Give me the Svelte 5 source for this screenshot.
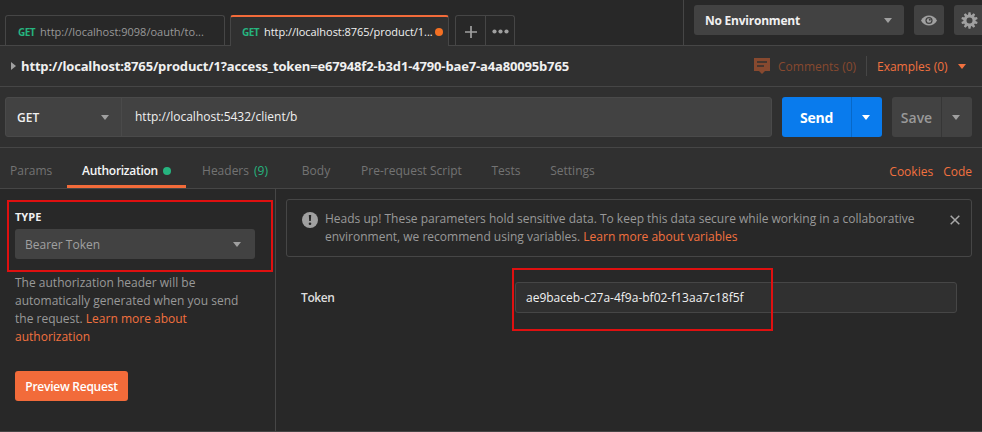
<script>
  const requestTabs = [
    { label: 'Params', width: 67 },
    { label: 'Authorization', width: 119, active: true },
    { label: 'Headers', width: 98, count: '(9)' },
    { label: 'Body', width: 64 },
    { label: 'Pre-request Script', width: 127 },
    { label: 'Tests', width: 62 },
    { label: 'Settings', width: 71 }
  ];
</script>

{#snippet caret()}
  <svg class="caret" width="8" height="5" viewBox="0 0 8 5"><path d="M0 0h8L4 5z" fill="currentColor" /></svg>
{/snippet}

<div class="app">
  <header class="topbar">
    <div class="tabs">
      <div class="tab"><b class="verb">GET</b><span class="url-one">http://localhost:9098/oauth/to...</span></div>
      <div class="tab current"><b class="verb">GET</b><span class="url-two">http://localhost:8765/product/1...</span><i class="unsaved"></i></div>
      <div class="tab-actions">
        <button aria-label="New tab"><svg width="12" height="12" viewBox="0 0 12 12"><path d="M6 0v12M0 6h12" stroke="#a0a0a0" stroke-width="1.7" /></svg></button>
        <button aria-label="More"><svg width="17" height="5" viewBox="0 0 17 5" fill="#a0a0a0"><circle cx="2.5" cy="2.5" r="2.1" /><circle cx="8.5" cy="2.5" r="2.1" /><circle cx="14.5" cy="2.5" r="2.1" /></svg></button>
      </div>
    </div>
    <div class="environment">
      <div class="env-select"><b>No Environment</b>{@render caret()}</div>
      <button class="square" aria-label="Preview environment">
        <svg width="16" height="11" viewBox="0 0 16 11"><path d="M0 5.5C3.4-1.3 12.6-1.3 16 5.5C12.6 12.3 3.4 12.3 0 5.5z" fill="#a0a0a0" /><circle cx="8" cy="5.5" r="3.6" fill="#424242" /><circle cx="8" cy="5.5" r="2.3" fill="#a0a0a0" /><circle cx="8.8" cy="4.7" r="1" fill="#424242" /></svg>
      </button>
      <button class="square" aria-label="Manage environments">
        <svg width="17" height="17" viewBox="-8.5 -8.5 17 17" fill="#a0a0a0">
          {#each [0, 36, 72, 108, 144, 180, 216, 252, 288, 324] as angle}<path d="M-1.6-5L-1-8.2h2L1.6-5z" transform="rotate({angle})" />{/each}
          <circle r="4.5" fill="none" stroke="#a0a0a0" stroke-width="3" />
        </svg>
      </button>
    </div>
  </header>

  <section class="request-title">
    <svg width="5" height="8" viewBox="0 0 5 8"><path d="M0 0l5 4-5 4z" fill="#a0a0a0" /></svg>
    <b>http://localhost:8765/product/1?access_token=e67948f2-b3d1-4790-bae7-a4a80095b765</b>
    <div class="comments">
      <svg width="16" height="16" viewBox="0 0 16 16"><path d="M0 0h16v13h-5l-3 3-3-3H0z" fill="#87492f" /><path d="M3 4h10M3 8h7" stroke="#303030" stroke-width="1.6" /></svg>
      <span>Comments (0)</span>
    </div>
    <div class="examples"><span>Examples (0)</span>{@render caret()}</div>
  </section>

  <section class="request-line">
    <div class="url-bar">
      <div class="method"><span>GET</span>{@render caret()}</div>
      <div class="url">http://localhost:5432/client/b</div>
    </div>
    <div class="split send"><b>Send</b><div>{@render caret()}</div></div>
    <div class="split save"><b>Save</b><div>{@render caret()}</div></div>
  </section>

  <nav>
    {#each requestTabs as tab}
      <div class="nav-item" class:active={tab.active} style="width: {tab.width}px">
        <span>{tab.label}</span>
        {#if tab.active}<i></i>{/if}
        {#if tab.count}<em>{tab.count}</em>{/if}
      </div>
    {/each}
    <div class="nav-links"><span>Cookies</span><span>Code</span></div>
  </nav>

  <main>
    <aside>
      <b class="type">TYPE</b>
      <div class="type-select"><span>Bearer Token</span>{@render caret()}</div>
      <p>The authorization header will be<br />automatically generated when you send<br />the request. <a>Learn more about<br />authorization</a></p>
      <button class="preview"><span>Preview Request</span></button>
      <div class="marker type-marker"></div>
    </aside>
    <div class="content">
      <div class="notice">
        <svg width="16" height="16" viewBox="0 0 16 16"><circle cx="8" cy="8" r="8" fill="#a0a0a0" /><path d="M6.8 3h2.4l-.4 6H7.2z" fill="#282828" /><circle cx="8" cy="11.7" r="1.3" fill="#282828" /></svg>
        <p>Heads up! These parameters hold sensitive data. To keep this data secure while working in a collaborative<br />environment, we recommend using variables. <a>Learn more about variables</a></p>
        <svg class="close" width="10" height="10" viewBox="0 0 10 10"><path d="M.7.7l8.6 8.6M9.3.7L.7 9.3" stroke="#a8a8a8" stroke-width="1.5" /></svg>
      </div>
      <div class="field">
        <span>Token</span>
        <div class="token"><span>ae9baceb-c27a-4f9a-bf02-f13aa7c18f5f</span><div class="marker token-marker"></div></div>
      </div>
    </div>
  </main>
</div>

<style>
  :global(body) { margin: 0; background: #282828; overflow: hidden; }
  .app, .app * { box-sizing: border-box; }
  .app { width: 982px; height: 432px; display: flex; flex-direction: column; background: #303030; color: #f0f0f0; font: 12px/18px "Open Sans", sans-serif; white-space: nowrap; }
  button { margin: 0; padding: 0; border: 0; background: none; font: inherit; color: inherit; }
  svg { display: block; flex: none; }
  b { font-weight: 700; }
  .caret { color: #a0a0a0; }

  .topbar { height: 46px; flex: none; display: flex; background: #282828; border-bottom: 1px solid #464646; }
  .tabs { width: 683px; display: flex; align-items: flex-start; padding: 15px 0 0 5px; }
  .tab { width: 220px; height: 30px; display: flex; align-items: center; padding: 3px 0 0 12px; margin-right: 5px; border: 1px solid #464646; border-bottom: 0; border-radius: 3px 3px 0 0; color: #999; font-size: 11px; }
  .verb { width: 22px; flex: none; color: #26b47f; font-size: 10px; letter-spacing: -0.6px; }
  .current { width: 219px; height: 31px; background: #303030; border-top: 2px solid #f26b3a; color: #f0f0f0; padding-top: 1px; padding-left: 11px; margin-right: 6px; }
  .url-two { width: 170px; letter-spacing: -0.04px; }
  .unsaved { width: 8px; height: 8px; flex: none; border-radius: 50%; background: #f47023; margin-left: 1px; }
  .tab-actions { width: 60px; height: 30px; display: flex; border: 1px solid #464646; border-bottom: 0; border-radius: 3px 3px 0 0; }
  .tab-actions button { width: 30px; display: flex; align-items: center; justify-content: center; padding-top: 2px; }
  .tab-actions button + button { border-left: 1px solid #464646; width: 29px; }
  .environment { flex: 1; display: flex; gap: 10px; border-left: 1px solid #464646; padding: 5px 0 0 10px; overflow: hidden; }
  .env-select { width: 210px; height: 30px; flex: none; display: flex; justify-content: space-between; align-items: center; padding: 0 12px 0 11px; background: #424242; border-radius: 3px; }
  .env-select b { letter-spacing: -0.23px; padding-top: 2px; }
  .square { width: 30px; height: 30px; flex: none; display: flex; align-items: center; justify-content: center; background: #424242; border-radius: 3px; }

  .request-title { height: 41px; flex: none; display: flex; align-items: center; border-bottom: 1px solid #464646; padding-left: 11px; }
  .request-title b { margin-left: 5px; font-size: 13px; letter-spacing: -0.155px; }
  .comments { margin-left: auto; height: 20px; display: flex; align-items: center; gap: 8px; color: #87492f; width: 113px; border-right: 1px solid #464646; }
  .comments span, .examples span { padding-top: 1px; }
  .examples { width: 115px; display: flex; justify-content: space-between; align-items: center; padding: 0 16px 0 10px; color: #f2713f; }
  .examples .caret { color: #f2713f; margin-top: 1px; }

  .request-line { height: 61px; flex: none; display: flex; gap: 10px; padding: 10px 10px 10px 5px; border-bottom: 1px solid #464646; }
  .url-bar { width: 767px; height: 40px; display: flex; align-items: center; background: #424242; border: 1px solid #4a4a4a; border-radius: 3px; }
  .method { width: 116px; height: 100%; display: flex; justify-content: space-between; align-items: center; padding: 0 12px 0 11px; border-right: 1px solid #4a4a4a; }
  .method span { font-weight: 600; padding-top: 1px; }
  .url { padding-left: 13px; }
  .split { height: 40px; display: flex; border-radius: 3px; align-items: center; font-size: 14px; }
  .split div { height: 100%; display: flex; align-items: center; justify-content: center; border-left: 1px solid; width: 31px; padding-right: 3px; }
  .split b { text-align: center; padding-top: 1px; letter-spacing: -0.2px; }
  .send { width: 100px; background: #097bed; color: #fff; }
  .send b { width: 69px; }
  .send div { border-color: #0768c8; }
  .send .caret { color: #fff; }
  .save { width: 80px; background: #424242; color: #999; }
  .save b { width: 49px; font-weight: 600; letter-spacing: 0; }
  .save div { border-color: #363636; }

  nav { height: 41px; flex: none; display: flex; border-bottom: 1px solid #464646; color: #737373; }
  .nav-item { height: 40px; display: flex; align-items: center; justify-content: center; padding-top: 6px; }
  .nav-item:first-child { justify-content: flex-start; padding-left: 10px; }
  .nav-item.active { color: #f5f5f5; font-weight: 600; letter-spacing: -0.28px; border-bottom: 3px solid #f26b3a; padding-top: 9px; }
  .nav-item i { width: 8px; height: 8px; border-radius: 50%; background: #26b47f; margin-left: 5px; }
  .nav-item em { font-style: normal; color: #26b47f; margin-left: 5px; }
  .nav-links { margin-left: auto; display: flex; gap: 10px; padding: 15px 10px 0 0; color: #f2713f; }

  main { height: 243px; flex: none; display: flex; background: #282828; border-bottom: 1px solid #464646; }
  aside { position: relative; width: 276px; border-right: 1px solid #464646; padding: 19px 0 0 15px; }
  .type { display: block; height: 21px; font-size: 11px; }
  .type-select { width: 240px; height: 30px; display: flex; justify-content: space-between; align-items: center; padding: 0 14px 0 10px; background: #424242; border-radius: 3px; color: #a0a0a0; }
  .type-select span { padding-top: 2px; }
  p { margin: 0; color: #999; }
  aside p { margin-top: 15px; }
  a { color: #f2713f; }
  .preview { width: 113px; height: 30px; margin-top: 25px; padding-top: 1px; background: #f26b3a; border-radius: 3px; color: #fff; font-weight: 600; letter-spacing: -0.25px; }
  .marker { position: absolute; border: 2px solid #df1010; }
  .type-marker { left: 7px; top: 11px; width: 266px; height: 72px; }
  .content { flex: 1; padding: 10px 10px 0; }
  .notice { height: 58px; display: flex; border: 1px solid #464646; border-radius: 3px; padding: 10px 11px 0 15px; }
  .notice > svg { margin-top: 2px; }
  .notice p { margin-left: 7px; flex: 1; }
  .notice .close { margin-top: 5px; }
  .field { display: flex; align-items: center; margin-top: 25px; padding-left: 15px; }
  .field > span { width: 214px; font-weight: 600; letter-spacing: -0.4px; color: #ddd; }
  .token { position: relative; width: 442px; height: 31px; display: flex; align-items: center; background: #303030; border: 1px solid #464646; border-radius: 3px; padding-left: 10px; }
  .token-marker { left: -4px; top: -15px; width: 261px; height: 63px; }
</style>
